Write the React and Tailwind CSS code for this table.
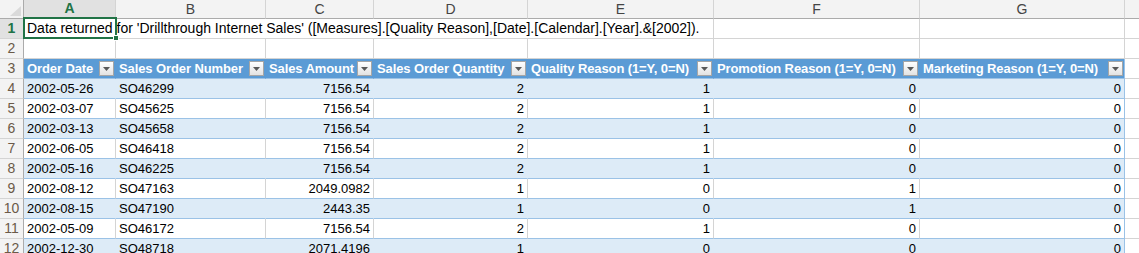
const COLS = [
  { id: 'A', w: 'w-[92px]' },
  { id: 'B', w: 'w-[150px]' },
  { id: 'C', w: 'w-[108px]' },
  { id: 'D', w: 'w-[154px]' },
  { id: 'E', w: 'w-[186px]' },
  { id: 'F', w: 'w-[206px]' },
  { id: 'G', w: 'w-[205px]' },
];

const HEADERS = [
  'Order Date',
  'Sales Order Number',
  'Sales Amount',
  'Sales Order Quantity',
  'Quality Reason (1=Y, 0=N)',
  'Promotion Reason (1=Y, 0=N)',
  'Marketing Reason (1=Y, 0=N)',
];

const ROWS = [
  ['2002-05-26', 'SO46299', '7156.54', '2', '1', '0', '0'],
  ['2002-03-07', 'SO45625', '7156.54', '2', '1', '0', '0'],
  ['2002-03-13', 'SO45658', '7156.54', '2', '1', '0', '0'],
  ['2002-06-05', 'SO46418', '7156.54', '2', '1', '0', '0'],
  ['2002-05-16', 'SO46225', '7156.54', '2', '1', '0', '0'],
  ['2002-08-12', 'SO47163', '2049.0982', '1', '0', '1', '0'],
  ['2002-08-15', 'SO47190', '2443.35', '1', '0', '1', '0'],
  ['2002-05-09', 'SO46172', '7156.54', '2', '1', '0', '0'],
  ['2002-12-30', 'SO48718', '2071.4196', '1', '0', '0', '0'],
];

const RowHead = ({ n, active }) => (
  <div
    className={`w-[24px] shrink-0 flex items-center justify-center border-r border-b border-r-[#ababab] border-b-[#d4d4d4] text-[14px] ${
      active ? 'bg-[#e1e1e1] text-[#217346] font-bold' : 'bg-[#f3f3f3] text-[#6b5a48]'
    }`}
  >
    {n}
  </div>
);

const FilterButton = () => (
  <div className="w-[15px] h-[15px] shrink-0 border border-[#a6a6a6] bg-gradient-to-b from-white to-[#e3e3e3] flex items-center justify-center">
    <svg width="7" height="4" viewBox="0 0 7 4">
      <polygon points="0,0 7,0 3.5,4" fill="#595959" />
    </svg>
  </div>
);

export default function App() {
  return (
    <div className="w-[1139px] h-[253px] overflow-hidden bg-white font-['Liberation_Sans',Arial,sans-serif] text-black select-none">
      {/* column letters */}
      <div className="flex h-[19px]">
        <div className="w-[24px] shrink-0 bg-[#f3f3f3] border-r border-b border-[#ababab] relative">
          <svg className="absolute right-[2px] bottom-[2px]" width="11" height="10" viewBox="0 0 11 10">
            <polygon points="11,0 11,10 0,10" fill="#dadada" />
          </svg>
        </div>
        {COLS.map((c) => (
          <div
            key={c.id}
            className={`${c.w} shrink-0 flex items-center justify-center border-r border-r-[#d4d4d4] text-[14px] ${
              c.id === 'A'
                ? 'bg-[#e1e1e1] text-[#217346] font-bold border-b-2 border-b-[#217346]'
                : 'bg-[#f3f3f3] text-[#444] border-b border-b-[#ababab]'
            }`}
          >
            {c.id}
          </div>
        ))}
        <div className="flex-1 bg-[#f3f3f3] border-b border-[#ababab]" />
      </div>

      {/* row 1 */}
      <div className="flex h-[20px]">
        <RowHead n={1} active />
        <div className="w-[92px] shrink-0 relative border-b border-[#d4d4d4] flex items-center">
          <span className="relative z-10 pl-[3px] whitespace-nowrap text-[14px]">
            Data returned for 'Drillthrough Internet Sales' ([Measures].[Quality Reason],[Date].[Calendar].[Year].&amp;[2002]).
          </span>
          <div className="absolute -left-[1px] -top-[2px] w-[94px] h-[22px] border-2 border-[#217346] z-20">
            <div className="absolute -right-[4px] -bottom-[4px] w-[6px] h-[6px] bg-[#217346] border border-white" />
          </div>
        </div>
        <div className="w-[150px] shrink-0 border-b border-[#d4d4d4]" />
        <div className="w-[108px] shrink-0 border-b border-[#d4d4d4]" />
        <div className="w-[154px] shrink-0 border-b border-[#d4d4d4]" />
        <div className="w-[186px] shrink-0 border-b border-r border-[#d4d4d4]" />
        <div className="w-[206px] shrink-0 border-b border-r border-[#d4d4d4]" />
        <div className="w-[205px] shrink-0 border-b border-r border-[#d4d4d4]" />
        <div className="flex-1 border-b border-[#d4d4d4]" />
      </div>

      {/* row 2 */}
      <div className="flex h-[20px]">
        <RowHead n={2} />
        {COLS.map((c) => (
          <div key={c.id} className={`${c.w} shrink-0 border-b border-r border-[#d4d4d4]`} />
        ))}
        <div className="flex-1 border-b border-[#d4d4d4]" />
      </div>

      {/* table header row */}
      <div className="flex h-[20px]">
        <RowHead n={3} />
        {COLS.map((c, i) => (
          <div
            key={c.id}
            className={`${c.w} shrink-0 bg-[#5b9bd5] border-b border-b-[#9bc2e6] flex items-center pl-[3px] pr-[1px] ${
              i === 6 ? 'border-r border-r-[#9bc2e6]' : 'border-r border-r-[#5b9bd5]'
            }`}
          >
            <span className="flex-1 overflow-hidden whitespace-nowrap text-white font-bold text-[13px] tracking-[-0.1px]">
              {HEADERS[i]}
            </span>
            <FilterButton />
          </div>
        ))}
        <div className="flex-1 border-b border-[#d4d4d4]" />
      </div>

      {/* data rows */}
      {ROWS.map((r, ri) => {
        const band = ri % 2 === 0;
        return (
          <div key={ri} className="flex h-[20px]">
            <RowHead n={ri + 4} />
            {COLS.map((c, ci) => (
              <div
                key={c.id}
                className={`${c.w} shrink-0 flex items-center text-[13px] border-b border-b-[#9bc2e6] border-r ${
                  ci < 2 ? 'justify-start pl-[3px]' : 'justify-end pr-[3px]'
                } ${band ? 'bg-[#ddebf7]' : 'bg-white'} ${
                  ci === 6 ? 'border-r-[#9bc2e6]' : band ? 'border-r-[#ddebf7]' : 'border-r-[#d4d4d4]'
                }`}
              >
                {r[ci]}
              </div>
            ))}
            <div className="flex-1 border-b border-[#d4d4d4]" />
          </div>
        );
      })}
    </div>
  );
}
